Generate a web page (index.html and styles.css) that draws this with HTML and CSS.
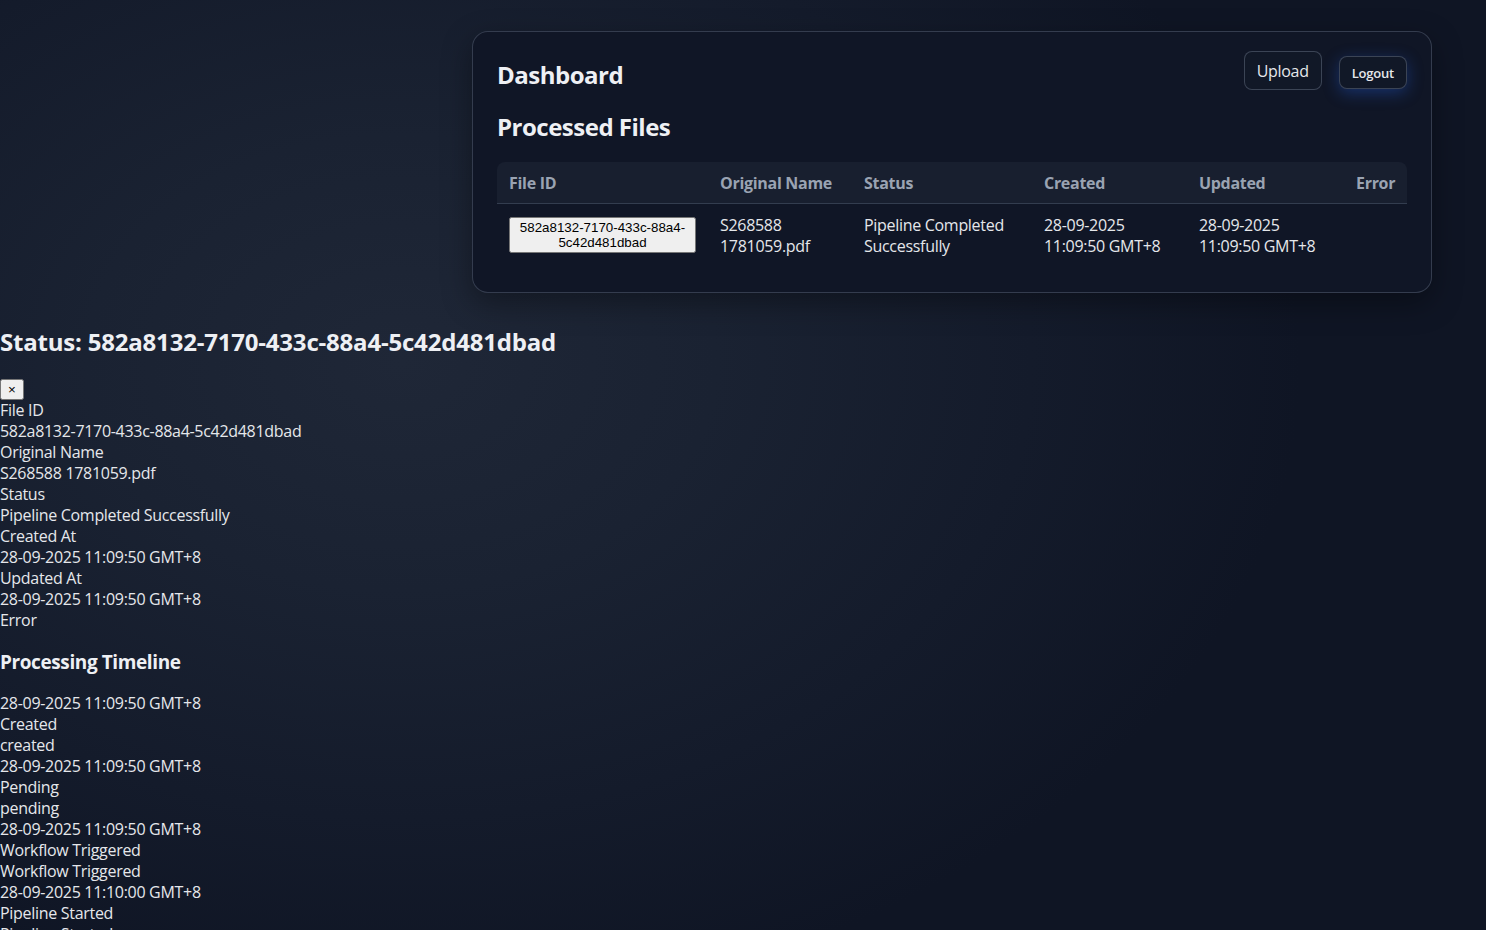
FILE: index.html
```html
<!DOCTYPE html>
<html lang="en">
<head>
<meta charset="utf-8">
<title>Dashboard</title>
<link rel="stylesheet" href="styles.css">
</head>
<body>
<div class="page">
  <div class="card">
    <div class="card-header">
      <h1 class="title">Dashboard</h1>
      <div class="actions">
        <button class="btn-upload">Upload</button>
        <button class="btn-logout">Logout</button>
      </div>
    </div>
    <h2 class="subtitle">Processed Files</h2>
    <table class="files">
      <thead>
        <tr>
          <th class="c-id">File ID</th>
          <th class="c-name">Original Name</th>
          <th class="c-status">Status</th>
          <th class="c-created">Created</th>
          <th class="c-updated">Updated</th>
          <th class="c-error">Error</th>
        </tr>
      </thead>
      <tbody>
        <tr>
          <td><button class="id-btn">582a8132-7170-433c-88a4-5c42d481dbad</button></td>
          <td>S268588 1781059.pdf</td>
          <td>Pipeline Completed Successfully</td>
          <td>28-09-2025 11:09:50 GMT+8</td>
          <td>28-09-2025 11:09:50 GMT+8</td>
          <td></td>
        </tr>
      </tbody>
    </table>
  </div>
</div>

<section class="details">
  <h2 class="status-title">Status: 582a8132-7170-433c-88a4-5c42d481dbad</h2>
  <button class="close-btn">×</button>
  <div class="field">File ID</div>
  <div class="field">582a8132-7170-433c-88a4-5c42d481dbad</div>
  <div class="field">Original Name</div>
  <div class="field">S268588 1781059.pdf</div>
  <div class="field">Status</div>
  <div class="field">Pipeline Completed Successfully</div>
  <div class="field">Created At</div>
  <div class="field">28-09-2025 11:09:50 GMT+8</div>
  <div class="field">Updated At</div>
  <div class="field">28-09-2025 11:09:50 GMT+8</div>
  <div class="field">Error</div>
  <div class="field"></div>

  <h3 class="timeline-title">Processing Timeline</h3>
  <div class="timeline">
    <div class="event">
      <div>28-09-2025 11:09:50 GMT+8</div>
      <div>Created</div>
      <div>created</div>
    </div>
    <div class="event">
      <div>28-09-2025 11:09:50 GMT+8</div>
      <div>Pending</div>
      <div>pending</div>
    </div>
    <div class="event">
      <div>28-09-2025 11:09:50 GMT+8</div>
      <div>Workflow Triggered</div>
      <div>Workflow Triggered</div>
    </div>
    <div class="event">
      <div>28-09-2025 11:10:00 GMT+8</div>
      <div>Pipeline Started</div>
      <div>Pipeline Started</div>
    </div>
    <div class="event">
      <div>28-09-2025 11:11:30 GMT+8</div>
      <div>Pipeline Completed Successfully</div>
      <div>Pipeline Completed Successfully</div>
    </div>
  </div>
</section>
</body>
</html>
```

FILE: styles.css
```css
html {
  min-height: 100%;
  background: radial-gradient(ellipse 900px 650px at 27% 36%, #1f2737 0%, #1a2232 35%, #141b2b 70%, #0f1524 100%);
  background-color: #0f1524;
}

body {
  margin: 0;
  font-family: "Open Sans", "Noto Sans", sans-serif;
  font-size: 16px;
  line-height: 21px;
  letter-spacing: -0.3px;
  color: #e5e7eb;
}

.page {
  display: flex;
  justify-content: flex-end;
  padding: 31px 54px 0 0;
}

.card {
  box-sizing: border-box;
  width: 960px;
  padding: 19px 24px 23px;
  background: #101626;
  border: 1px solid rgba(148, 163, 184, 0.28);
  border-radius: 16px;
  box-shadow: 0 10px 30px rgba(0, 0, 0, 0.35);
}

.card-header {
  display: flex;
  justify-content: space-between;
  align-items: flex-start;
}

.title {
  margin: 8px 0 0;
  font-size: 24px;
  line-height: 32px;
  font-weight: 700;
  letter-spacing: -0.5px;
  color: #eef0f4;
}

.actions {
  display: flex;
  align-items: flex-start;
  gap: 17px;
}

.btn-upload {
  height: 39px;
  padding: 0 12px;
  font-family: inherit;
  font-size: 16px;
  letter-spacing: -0.3px;
  color: #e5e7eb;
  background: #111827;
  border: 1px solid rgba(148, 163, 184, 0.32);
  border-radius: 8px;
}

.btn-logout {
  margin-top: 5px;
  height: 33px;
  padding: 0 12px;
  font-family: inherit;
  font-size: 13px;
  font-weight: 600;
  letter-spacing: -0.2px;
  color: #e5e7eb;
  background: #111827;
  border: 1px solid rgba(148, 163, 184, 0.32);
  border-radius: 8px;
  box-shadow: 0 4px 16px rgba(37, 99, 235, 0.35);
}

.subtitle {
  margin: 20px 0 19px;
  font-size: 24px;
  line-height: 32px;
  font-weight: 700;
  letter-spacing: -0.5px;
  color: #eef0f4;
}

.files {
  width: 100%;
  border-collapse: separate;
  border-spacing: 0;
  table-layout: fixed;
}

.files th {
  padding: 11px 12px 9px;
  text-align: left;
  font-weight: 700;
  color: #9aa3b2;
  background: #181f2f;
  border-bottom: 1px solid #333d4f;
}

.files th:first-child { border-top-left-radius: 8px; }
.files th:last-child { border-top-right-radius: 8px; }

.c-id { width: 187px; }
.c-name { width: 120px; }
.c-status { width: 156px; }
.c-created { width: 131px; }
.c-updated { width: 133px; }

.files td {
  padding: 11px 12px 12px;
  vertical-align: top;
  color: #e5e7eb;
}

.id-btn {
  margin-top: 2px;
  width: 100%;
  letter-spacing: normal;
}

.details {
  padding-top: 13px;
}

.status-title {
  margin: 20px 0 21px;
  font-size: 24px;
  line-height: 32px;
  font-weight: 700;
  letter-spacing: -0.2px;
  color: #eef0f4;
}

.close-btn {
  display: block;
  letter-spacing: normal;
}

.field {
  min-height: 0;
}

.timeline-title {
  margin: 19px 0 18px;
  font-size: 19px;
  line-height: 25px;
  font-weight: 700;
  letter-spacing: -0.4px;
  color: #eef0f4;
}
```
